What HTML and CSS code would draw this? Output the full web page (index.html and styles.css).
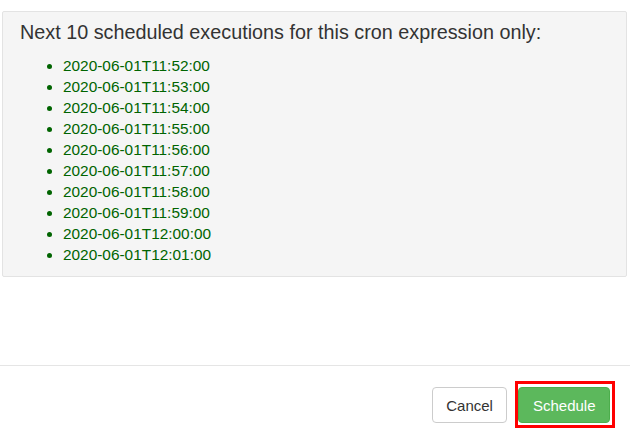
FILE: index.html
```html
<!DOCTYPE html>
<html>
<head>
<meta charset="utf-8">
<link rel="stylesheet" href="styles.css">
</head>
<body>
<div class="page">
  <div class="content">
    <div class="well">
      <h4 class="title">Next 10 scheduled executions for this cron expression only:</h4>
      <ul class="runs">
        <li>2020-06-01T11:52:00</li>
        <li>2020-06-01T11:53:00</li>
        <li>2020-06-01T11:54:00</li>
        <li>2020-06-01T11:55:00</li>
        <li>2020-06-01T11:56:00</li>
        <li>2020-06-01T11:57:00</li>
        <li>2020-06-01T11:58:00</li>
        <li>2020-06-01T11:59:00</li>
        <li>2020-06-01T12:00:00</li>
        <li>2020-06-01T12:01:00</li>
      </ul>
    </div>
  </div>
  <div class="footer">
    <button class="btn btn-default">Cancel</button>
    <button class="btn btn-success highlighted">Schedule</button>
  </div>
</div>
</body>
</html>
```

FILE: styles.css
```css
html, body {
  margin: 0;
  padding: 0;
  background: #fff;
}
body {
  font-family: "Liberation Sans", Arial, sans-serif;
  color: #333;
  width: 630px;
  height: 441px;
  overflow: hidden;
}
.content {
  padding: 11px 3px 0 2px;
  height: 354px;
  box-sizing: border-box;
}
.well {
  background: #f5f5f5;
  border: 1px solid #e3e3e3;
  border-radius: 2px;
  padding: 10px 18px 10px 17px;
  height: 266px;
  box-sizing: border-box;
}
.title {
  margin: 0;
  font-size: 19.8px;
  line-height: 21px;
  font-weight: normal;
  color: #333;
}
.runs {
  margin: 12px 0 0 0;
  padding-left: 43px;
  color: #006400;
  font-size: 15.4px;
  line-height: 21px;
}
.footer {
  border-top: 1px solid #e5e5e5;
  margin-top: 11px;
  padding: 21px 20px 0 0;
  display: flex;
  justify-content: flex-end;
  gap: 11px;
}
.btn {
  font-family: "Liberation Sans", Arial, sans-serif;
  font-size: 15px;
  line-height: 21px;
  padding: 6.5px 13.5px;
  border-radius: 4px;
  border: 1px solid #ccc;
  background: #fff;
  color: #333;
  cursor: pointer;
}
.btn-success {
  background: #5cb85c;
  border-color: #4cae4c;
  color: #fff;
}
.highlighted {
  position: relative;
}
.highlighted::after {
  content: "";
  position: absolute;
  top: -7px;
  left: -4px;
  right: -6px;
  bottom: -6px;
  border: 3px solid #f00;
  pointer-events: none;
}
```
